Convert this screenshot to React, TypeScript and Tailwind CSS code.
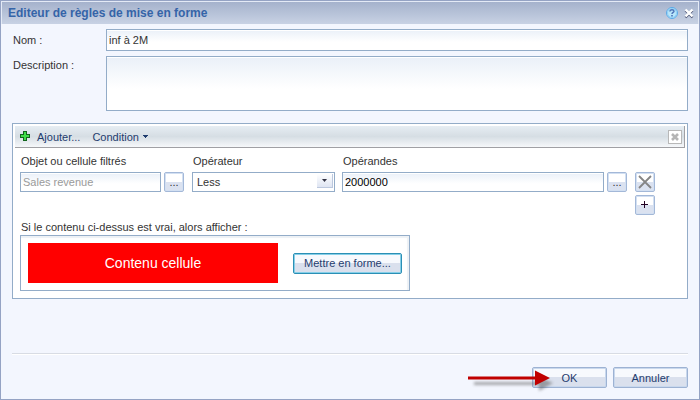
import { useState } from "react";
import type { ButtonHTMLAttributes } from "react";

const FIELD =
  "min-w-0 border border-[#93acc8] bg-linear-to-b from-[#eaf0f8] to-white to-60% shadow-[inset_0_1px_0_#ffffff] outline-none";

type ButtonProps = ButtonHTMLAttributes<HTMLButtonElement>;

function SquareButton({ className = "", ...props }: ButtonProps) {
  return (
    <button
      type="button"
      className={`flex size-5 shrink-0 items-center justify-center rounded-xs border border-[#a3b8d8] bg-linear-to-b from-white from-50% to-[#dbe2f0] to-50% shadow-[inset_0_0_0_1px_#d3e0f2] ${className}`}
      {...props}
    />
  );
}

function DialogButton(props: ButtonProps) {
  return (
    <button
      type="button"
      className="h-[21px] w-[75px] rounded-xs border border-[#9db2d3] bg-linear-to-b from-[#f7f9fd] from-50% to-[#dae0ed] to-50% text-[#1f3c6e] shadow-[inset_0_0_0_1px_#c9d8ed]"
      {...props}
    />
  );
}

function HelpIcon() {
  return (
    <svg width="12" height="12" viewBox="0 0 12 12" aria-hidden="true">
      <circle cx="6" cy="6" r="5.5" fill="#b9e6fb" stroke="#5ba8e6" />
      <circle cx="6" cy="6" r="4.5" fill="none" stroke="#8fd0f5" />
      <path d="M4 4.5V3.8Q4.2 2.7 6 2.7T8 4.2Q8 5 7 5.5T6 7" fill="none" stroke="#4d74b8" strokeWidth="1.4" />
      <path d="M5.2 8h1.6v1.5H5.2z" fill="#4d74b8" />
    </svg>
  );
}

function CloseIcon() {
  return (
    <svg width="10" height="11" viewBox="0 0 10 11" aria-hidden="true">
      <path d="M1.5 2.5l7 7M8.5 2.5l-7 7" stroke="#4f5675" strokeWidth="2.4" />
      <path d="M1.5 1.5l7 7M8.5 1.5l-7 7" stroke="#ffffff" strokeWidth="2.4" />
    </svg>
  );
}

function AddIcon() {
  return (
    <svg width="11" height="11" viewBox="0 0 11 11" shapeRendering="crispEdges" aria-hidden="true">
      <path d="M3 0h4v3h3v4H7v3H3V7H0V3h3z" fill="#12661c" />
      <path d="M4 1h2v3h3v2H6v3H4V6H1V4h3z" fill="#3fdc48" />
    </svg>
  );
}

function Arrow() {
  return (
    <svg
      className="pointer-events-none absolute right-[121px] -bottom-2 z-10"
      width="100"
      height="28"
      viewBox="0 0 100 28"
      aria-hidden="true"
    >
      <defs>
        <filter id="soft" x="-10%" y="-40%" width="120%" height="180%">
          <feGaussianBlur stdDeviation="1.4" />
        </filter>
      </defs>
      <path d="M6 13h65V8l14 6-14 8v-6H6z" transform="translate(1 1)" fill="#555555" opacity=".5" filter="url(#soft)" />
      <path d="M1 8.5h67V2.5l15 7.5-15 7.5v-6H1z" fill="#c00000" />
    </svg>
  );
}

export default function App() {
  const [name, setName] = useState("inf à 2M");
  const [description, setDescription] = useState("");
  const [operator, setOperator] = useState("Less");
  const [operand, setOperand] = useState("2000000");

  return (
    <div className="flex min-h-screen flex-col border border-[#95a3c4] bg-[#f3f6fe] font-['Liberation_Sans',Arial,sans-serif] text-[11px] leading-[14px] text-[#333333]">
      {/* Title bar */}
      <header className="flex h-[23px] shrink-0 items-center border-x border-t border-[#e4eaf6] bg-linear-to-b from-[#a5b2cc] to-[#c8d2e4] pr-1 pl-1.5">
        <h1 className="flex-1 text-[12px] font-bold text-[#3564a8]">Editeur de règles de mise en forme</h1>
        <button type="button" aria-label="Aide" className="mr-1.5">
          <HelpIcon />
        </button>
        <button type="button" aria-label="Fermer">
          <CloseIcon />
        </button>
      </header>

      <main className="flex flex-1 flex-col px-[11px] pt-[5px] pb-[11px]">
        {/* Name and description */}
        <div className="flex items-center">
          <label htmlFor="name" className="w-[94px] shrink-0 pl-px">Nom :</label>
          <input
            id="name"
            value={name}
            onChange={(e) => setName(e.target.value)}
            className={`h-[22px] flex-1 px-0.5 ${FIELD}`}
          />
        </div>
        <div className="mt-[5px] flex items-start">
          <label htmlFor="description" className="w-[94px] shrink-0 pt-0.5 pl-px">Description :</label>
          <textarea
            id="description"
            value={description}
            onChange={(e) => setDescription(e.target.value)}
            className={`block h-[55px] flex-1 resize-none px-0.5 ${FIELD}`}
          />
        </div>

        {/* Rule */}
        <section className="mt-3 border border-[#93acc8] bg-white px-0.5 pt-0.5 pb-[7px]">
          <div className="flex h-[22px] items-center border-r border-b border-[#a0a0a4] bg-linear-to-b from-[#e6edf3] via-[#d6dee4] to-[#f6f8fa] pr-0.5 pl-[5px] text-[#1f3c6e]">
            <button type="button" className="flex items-center gap-1.5">
              <AddIcon />
              Ajouter...
            </button>
            <button type="button" className="ml-3 flex items-center gap-1">
              Condition
              <svg width="5" height="3" viewBox="0 0 5 3" shapeRendering="crispEdges" aria-hidden="true">
                <path d="M0 0h5v1H4v1H3v1H2V2H1V1H0z" fill="#1f3c6e" />
              </svg>
            </button>
            <button
              type="button"
              aria-label="Supprimer la règle"
              className="ml-auto flex size-3.5 items-center justify-center border border-[#b8b8b8] bg-white"
            >
              <svg width="8" height="8" viewBox="0 0 8 8" aria-hidden="true">
                <path d="M1 1l6 6M7 1L1 7" stroke="#b5b5b5" strokeWidth="2.6" />
              </svg>
            </button>
          </div>

          <div className="px-[5px] pt-1.5">
            <div className="flex items-end">
              <div className="w-[141px] shrink-0">
                <label htmlFor="object" className="mb-1 block pl-px">Objet ou cellule filtrés</label>
                <input
                  id="object"
                  readOnly
                  value="Sales revenue"
                  className={`block h-5 w-full px-0.5 text-[#9a9a9a] ${FIELD}`}
                />
              </div>
              <SquareButton className="ml-[3px]" aria-label="Choisir l'objet">...</SquareButton>
              <div className="ml-2 w-[143px] shrink-0">
                <label htmlFor="operator" className="mb-1 block pl-px">Opérateur</label>
                <div className="relative">
                  <select
                    id="operator"
                    value={operator}
                    onChange={(e) => setOperator(e.target.value)}
                    className="block h-5 w-full appearance-none border border-[#93acc8] bg-white pl-1 outline-none"
                  >
                    <option>Less</option>
                    <option>Equal</option>
                    <option>Greater</option>
                  </select>
                  <span className="pointer-events-none absolute top-0.5 right-0.5 flex h-3.5 w-4 items-center justify-center border-r border-b border-[#bcc8de] bg-linear-to-b from-white to-[#dfe5f2]">
                    <svg width="5" height="3" viewBox="0 0 5 3" aria-hidden="true">
                      <path d="M0 0h5L2.5 3z" fill="#333344" />
                    </svg>
                  </span>
                </div>
              </div>
              <div className="ml-[7px] min-w-0 flex-1">
                <label htmlFor="operand" className="mb-1 block pl-px">Opérandes</label>
                <input
                  id="operand"
                  value={operand}
                  onChange={(e) => setOperand(e.target.value)}
                  className={`block h-5 w-full px-0.5 text-black ${FIELD}`}
                />
              </div>
              <SquareButton className="ml-[3px]" aria-label="Choisir l'opérande">...</SquareButton>
              <SquareButton className="mr-[25px] ml-2" aria-label="Supprimer l'opérande">
                <svg width="14" height="14" viewBox="0 0 14 14" aria-hidden="true">
                  <path d="M1 1l12 12M13 1L1 13" stroke="#858585" strokeWidth="1.8" />
                </svg>
              </SquareButton>
            </div>
            <div className="mt-[3px] mr-[25px] flex justify-end">
              <SquareButton aria-label="Ajouter un opérande">
                <svg width="8" height="8" viewBox="0 0 8 8" shapeRendering="crispEdges" aria-hidden="true">
                  <path d="M3 0h1v3h3v1H4v3H3V4H0V3h3z" fill="#220022" />
                </svg>
              </SquareButton>
            </div>

            <p className="mt-[5px] pl-px">Si le contenu ci-dessus est vrai, alors afficher :</p>
            <div className="mt-px flex w-[390px] items-center border border-[#93acc8] bg-white p-[7px] shadow-[inset_-2px_2px_1px_#edf1f5]">
              <div className="flex h-10 w-[250px] items-center justify-center bg-[#ff0000] text-[14px] text-white">
                Contenu cellule
              </div>
              <button
                type="button"
                className="ml-auto h-[21px] w-[109px] rounded-xs border border-[#2b8fb5] bg-linear-to-b from-[#f7f9fd] from-50% to-[#dae0ed] to-50% text-[#1f3c6e] shadow-[inset_0_0_0_1px_#86cfe8]"
              >
                Mettre en forme...
              </button>
            </div>
          </div>
        </section>

        {/* Footer */}
        <footer className="relative mt-auto">
          <hr className="mb-3 border-t border-b border-t-[#d8dce4] border-b-white" />
          <div className="flex justify-end gap-1.5">
            <DialogButton>OK</DialogButton>
            <DialogButton>Annuler</DialogButton>
          </div>
          <Arrow />
        </footer>
      </main>
    </div>
  );
}
